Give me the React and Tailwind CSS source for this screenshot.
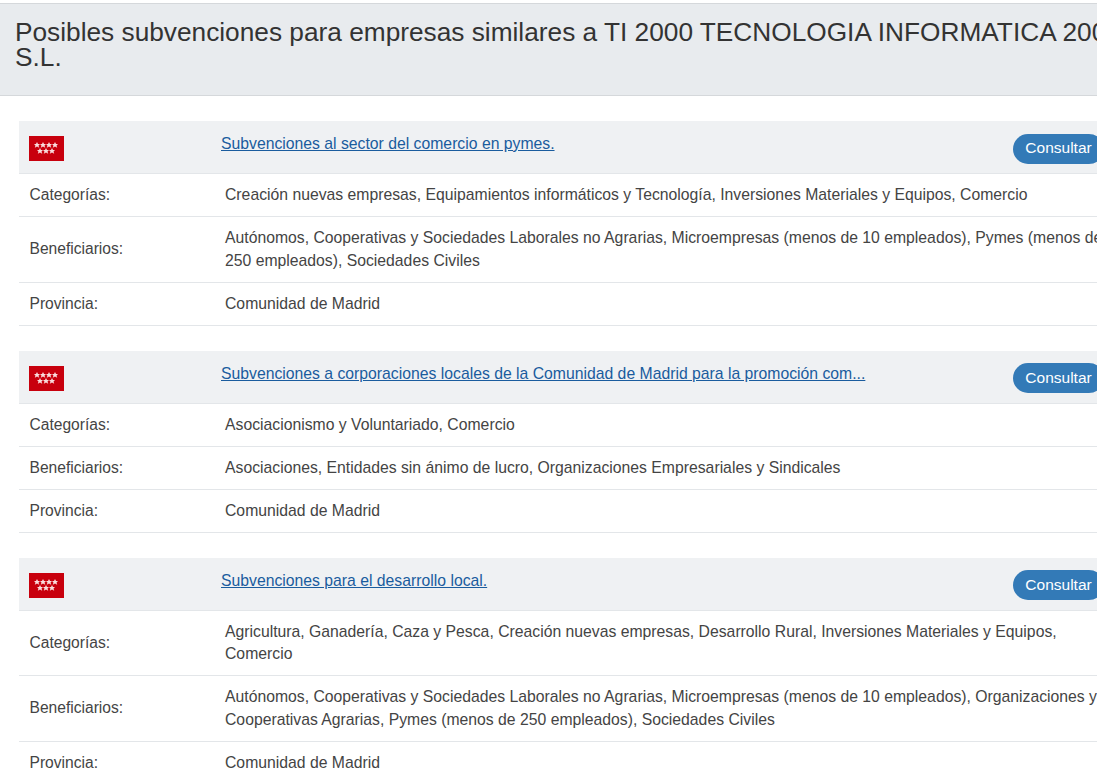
const GRANTS = [
  {
    title: 'Subvenciones al sector del comercio en pymes.',
    rows: [
      ['Categorías:', 'Creación nuevas empresas, Equipamientos informáticos y Tecnología, Inversiones Materiales y Equipos, Comercio'],
      ['Beneficiarios:', 'Autónomos, Cooperativas y Sociedades Laborales no Agrarias, Microempresas (menos de 10 empleados), Pymes (menos de 250 empleados), Sociedades Civiles'],
      ['Provincia:', 'Comunidad de Madrid'],
    ],
  },
  {
    title: 'Subvenciones a corporaciones locales de la Comunidad de Madrid para la promoción com...',
    rows: [
      ['Categorías:', 'Asociacionismo y Voluntariado, Comercio'],
      ['Beneficiarios:', 'Asociaciones, Entidades sin ánimo de lucro, Organizaciones Empresariales y Sindicales'],
      ['Provincia:', 'Comunidad de Madrid'],
    ],
  },
  {
    title: 'Subvenciones para el desarrollo local.',
    rows: [
      ['Categorías:', 'Agricultura, Ganadería, Caza y Pesca, Creación nuevas empresas, Desarrollo Rural, Inversiones Materiales y Equipos, Comercio'],
      ['Beneficiarios:', 'Autónomos, Cooperativas y Sociedades Laborales no Agrarias, Microempresas (menos de 10 empleados), Organizaciones y Cooperativas Agrarias, Pymes (menos de 250 empleados), Sociedades Civiles'],
      ['Provincia:', 'Comunidad de Madrid'],
    ],
  },
]

const STAR = '0,-3 1,-1 3,-1 1.5,0.5 2.2,2.8 0,1.5 -2.2,2.8 -1.5,0.5 -3,-1 -1,-1'

// Flag of the Comunidad de Madrid: red field, 4 + 3 white stars
function MadridFlag() {
  const stars = [
    [8, 9], [14, 9], [20, 9], [26, 9],
    [11, 15], [17, 15], [23, 15],
  ]
  return (
    <svg width="35" height="25" viewBox="0 0 35 25" className="block">
      <rect width="35" height="25" fill="#c8000d" />
      {stars.map(([x, y]) => (
        <polygon key={`${x}-${y}`} points={STAR} transform={`translate(${x} ${y})`} fill="#f9dcdc" />
      ))}
    </svg>
  )
}

function Grant({ grant }) {
  return (
    <section className="mb-[24.5px]">
      {/* Title row */}
      <div className="flex h-[53px] bg-[#eff1f3] border-b border-[#e3e6e9]">
        <div className="w-[202px] pl-[10px] pt-[15px] shrink-0">
          <MadridFlag />
        </div>
        <a href="#" className="pt-[12px] text-[#1a5c9e] underline flex-1">
          {grant.title}
        </a>
        <div className="pt-[12.5px] pr-1">
          <button className="h-[30px] w-[91px] rounded-full bg-[#337ab7] text-white text-center text-[15.5px]">
            Consultar
          </button>
        </div>
      </div>

      {/* Detail rows */}
      {grant.rows.map(([label, value]) => (
        <div key={label} className="flex items-center border-b border-[#e3e6e9] py-[10px] pl-[10.5px]">
          <div className="w-[195.5px] shrink-0 text-[15.6px]">{label}</div>
          <div className="flex-1">{value}</div>
        </div>
      ))}
    </section>
  )
}

export default function App() {
  return (
    <div className="h-[775px] w-[1097px] overflow-hidden bg-white text-[#444444] text-[15.75px] leading-[22.25px] font-['Liberation_Sans',Arial,sans-serif]">
      <div className="pt-[3px]">
        {/* Title runs past the right edge of the window */}
        <header className="h-[93px] w-[1160px] bg-[#e8ebee] border-y border-[#d5d8db] px-[15px] pt-[16px]">
          <h1 className="text-[26.25px] leading-[25px] text-[#333333]">
            Posibles subvenciones para empresas similares a TI 2000 TECNOLOGIA INFORMATICA 2000 S.L.
          </h1>
        </header>

        <main className="w-[1108px] pt-[25px] pl-[19px]">
          {GRANTS.map(grant => (
            <Grant key={grant.title} grant={grant} />
          ))}
        </main>
      </div>
    </div>
  )
}
